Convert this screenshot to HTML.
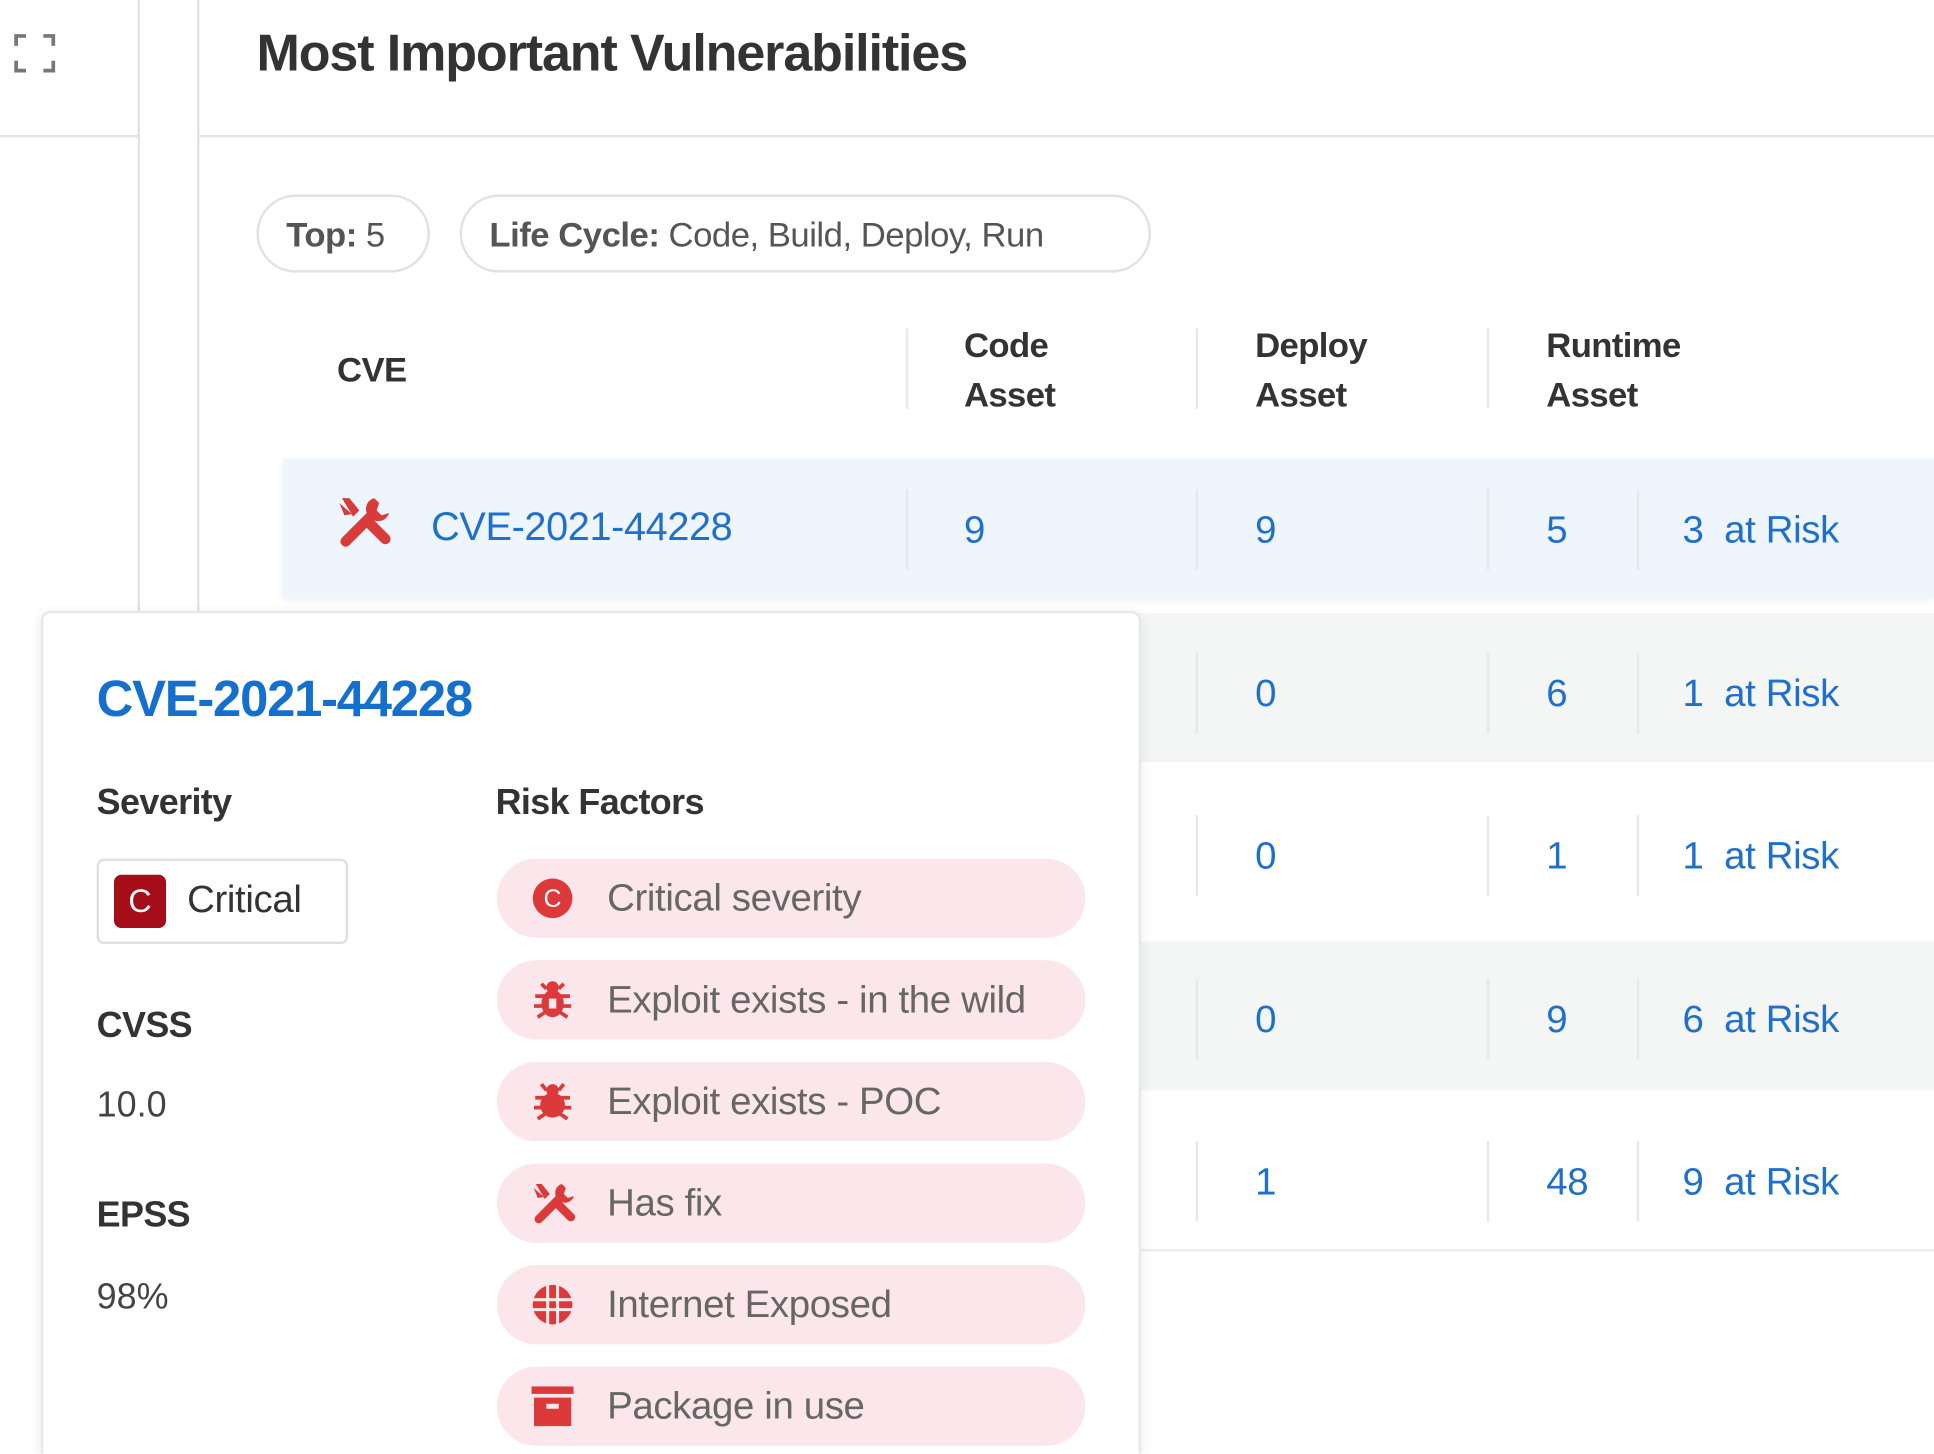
<!DOCTYPE html>
<html><head><meta charset="utf-8"><style>
*{margin:0;padding:0;box-sizing:border-box}
html,body{width:1934px;height:1454px;overflow:hidden;background:#fff;font-family:"Liberation Sans",sans-serif}
#s{position:absolute;left:0;top:0;width:1561px;height:1173px;overflow:hidden;transform:scale(1.2390);transform-origin:0 0}
.a{position:absolute;white-space:nowrap}
.h{font-weight:bold;color:#333;font-size:28px;letter-spacing:-0.5px}
.b{color:#1f6fcc;font-size:31px;letter-spacing:-0.3px}
.vs{position:absolute;width:2px;background:#e8e8e8}
.pill{position:absolute;left:401px;width:475px;height:64px;border-radius:32px;background:#fbe6ec}
.pill span{position:absolute;left:89px;top:14px;font-size:31px;color:#666;letter-spacing:-0.3px}
.pill svg{position:absolute;left:28px;top:15px}
.chip{position:absolute;top:157px;height:63px;border:2px solid #e2e2e2;border-radius:32px;font-size:28px;color:#555;padding:15px 22px;letter-spacing:-0.4px}
.row{position:absolute;left:228px;width:1333px}
</style></head><body><div id="s">
<div style="position:absolute;left:111px;top:0;width:2px;height:495px;background:#e3e3e3"></div>
<div style="position:absolute;left:159px;top:0;width:2px;height:495px;background:#e3e3e3"></div>
<div style="position:absolute;left:0;top:109px;width:111px;height:2px;background:#e3e3e3"></div>
<div style="position:absolute;left:161px;top:109px;width:1400px;height:2px;background:#e3e3e3"></div>
<svg class="a" style="left:11px;top:27px" width="34" height="32" viewBox="0 0 34 32" fill="none" stroke="#777" stroke-width="3"><path d="M2 10V2h8M24 2h8v8M32 22v8h-8M10 30H2v-8"/></svg>
<div class="a" style="left:207px;top:19px;font-size:42px;font-weight:bold;color:#333;letter-spacing:-0.9px">Most Important Vulnerabilities</div>
<div class="chip" style="left:207px;width:140px"><b>Top:</b> 5</div>
<div class="chip" style="left:371px;width:558px"><b>Life Cycle:</b> Code, Build, Deploy, Run</div>
<div class="a h" style="left:272px;top:283px">CVE</div>
<div class="a h" style="left:778px;top:259px;line-height:40px">Code<br>Asset</div>
<div class="a h" style="left:1013px;top:259px;line-height:40px">Deploy<br>Asset</div>
<div class="a h" style="left:1248px;top:259px;line-height:40px">Runtime<br>Asset</div>
<div class="vs" style="left:731px;top:265px;height:65px"></div>
<div class="vs" style="left:965px;top:265px;height:65px"></div>
<div class="vs" style="left:1200px;top:265px;height:65px"></div>
<div class="row" style="top:370px;height:113px;background:#eef5fd;box-shadow:0 2px 6px rgba(0,0,0,.06)"></div>
<div class="row" style="top:495px;height:120px;background:#f4f5f5"></div>
<div class="row" style="top:760px;height:120px;background:#f4f5f5"></div>
<div class="row" style="top:1008px;height:2px;background:#eee"></div>
<svg class="a" style="left:272px;top:400px" width="44" height="42" viewBox="0 0 44 42" fill="#d93a3a"><path d="M4 2l6 0 8 10-5 5z M2 6l4 10 6-1z"/><path d="M30 2a9 9 0 0 0-6 12L4 34a4 4 0 0 0 6 6l20-20a9 9 0 0 0 12-6l-6 2-4-4 2-6z"/><path d="M22 24l14 14a4 4 0 0 0 6-6L28 18z"/></svg>
<div class="a b" style="left:348px;top:407px;font-size:32px">CVE-2021-44228</div>
<div class="vs" style="left:731px;top:395px;height:65px"></div>
<div class="vs" style="left:965px;top:395px;height:65px"></div>
<div class="vs" style="left:1200px;top:395px;height:65px"></div>
<div class="vs" style="left:1321px;top:395px;height:65px"></div>
<div class="a b" style="left:778px;top:410px">9</div><div class="a b" style="left:1013px;top:410px">9</div><div class="a b" style="left:1248px;top:410px">5</div><div class="a b" style="left:1358px;top:410px">3&nbsp;&nbsp;at Risk</div>

<div class="vs" style="left:965px;top:527px;height:65px"></div><div class="vs" style="left:1200px;top:527px;height:65px"></div><div class="vs" style="left:1321px;top:527px;height:65px"></div>
<div class="a b" style="left:1013px;top:542px">0</div><div class="a b" style="left:1248px;top:542px">6</div><div class="a b" style="left:1358px;top:542px">1&nbsp;&nbsp;at Risk</div>

<div class="vs" style="left:965px;top:658px;height:65px"></div><div class="vs" style="left:1200px;top:658px;height:65px"></div><div class="vs" style="left:1321px;top:658px;height:65px"></div>
<div class="a b" style="left:1013px;top:673px">0</div><div class="a b" style="left:1248px;top:673px">1</div><div class="a b" style="left:1358px;top:673px">1&nbsp;&nbsp;at Risk</div>

<div class="vs" style="left:965px;top:790px;height:65px"></div><div class="vs" style="left:1200px;top:790px;height:65px"></div><div class="vs" style="left:1321px;top:790px;height:65px"></div>
<div class="a b" style="left:1013px;top:805px">0</div><div class="a b" style="left:1248px;top:805px">9</div><div class="a b" style="left:1358px;top:805px">6&nbsp;&nbsp;at Risk</div>

<div class="vs" style="left:965px;top:921px;height:65px"></div><div class="vs" style="left:1200px;top:921px;height:65px"></div><div class="vs" style="left:1321px;top:921px;height:65px"></div>
<div class="a b" style="left:1013px;top:936px">1</div><div class="a b" style="left:1248px;top:936px">48</div><div class="a b" style="left:1358px;top:936px">9&nbsp;&nbsp;at Risk</div>

<div style="position:absolute;left:33px;top:493px;width:888px;height:700px;background:#fff;border:2px solid #e8e8e8;border-radius:8px;box-shadow:0 2px 10px rgba(0,0,0,.08)"></div>
<div class="a" style="left:78px;top:541px;font-size:41px;font-weight:bold;color:#1570cd;letter-spacing:-1px">CVE-2021-44228</div>
<div class="a h" style="left:78px;top:632px;font-size:29px">Severity</div>
<div class="a h" style="left:400px;top:632px;font-size:29px">Risk Factors</div>
<div style="position:absolute;left:78px;top:693px;width:203px;height:69px;border:2px solid #e0e0e0;border-radius:6px"></div>
<div style="position:absolute;left:92px;top:706px;width:42px;height:43px;background:#a50e18;border-radius:6px;color:#fff;font-size:26px;text-align:center;line-height:43px">C</div>
<div class="a" style="left:151px;top:708px;font-size:31px;color:#333;letter-spacing:-0.3px">Critical</div>
<div class="a h" style="left:78px;top:812px;font-size:29px">CVSS</div>
<div class="a" style="left:78px;top:876px;font-size:29px;color:#444">10.0</div>
<div class="a h" style="left:78px;top:965px;font-size:29px">EPSS</div>
<div class="a" style="left:78px;top:1031px;font-size:29px;color:#444">98%</div>

<div class="pill" style="top:693px"><svg width="34" height="34" viewBox="0 0 34 34"><circle cx="17" cy="17" r="16" fill="#dc3a3a"/><text x="17" y="24" font-size="20" fill="#fff" text-anchor="middle" font-family="Liberation Sans">C</text></svg><span>Critical severity</span></div>
<div class="pill" style="top:775px"><svg width="34" height="34" viewBox="0 0 34 34" fill="#dc3a3a"><ellipse cx="17" cy="20" rx="9" ry="11"/><circle cx="17" cy="7" r="5"/><path d="M3 14h8M23 14h8M2 22h8M24 22h8M5 31l6-4M29 31l-6-4M8 4l4 4M26 4l-4 4" stroke="#dc3a3a" stroke-width="3"/><path d="M14 16h6v8h-6z" fill="#fbe6ec"/></svg><span>Exploit exists - in the wild</span></div>
<div class="pill" style="top:857px"><svg width="34" height="34" viewBox="0 0 34 34" fill="#dc3a3a"><ellipse cx="17" cy="20" rx="10" ry="10"/><circle cx="17" cy="8" r="5"/><path d="M3 14h8M23 14h8M2 22h8M24 22h8M5 31l6-4M29 31l-6-4M8 3l4 5M26 3l-4 5" stroke="#dc3a3a" stroke-width="3"/></svg><span>Exploit exists - POC</span></div>
<div class="pill" style="top:939px"><svg width="36" height="34" viewBox="0 0 44 42" fill="#dc3a3a"><path d="M4 2l6 0 8 10-5 5z M2 6l4 10 6-1z"/><path d="M30 2a9 9 0 0 0-6 12L4 34a4 4 0 0 0 6 6l20-20a9 9 0 0 0 12-6l-6 2-4-4 2-6z"/><path d="M22 24l14 14a4 4 0 0 0 6-6L28 18z"/></svg><span>Has fix</span></div>
<div class="pill" style="top:1021px"><svg width="34" height="34" viewBox="0 0 34 34"><circle cx="17" cy="17" r="16" fill="#dc3a3a"/><path d="M1 13h32M1 21h32M13 1v32M21 1v32" stroke="#fbe6ec" stroke-width="2.5"/></svg><span>Internet Exposed</span></div>
<div class="pill" style="top:1103px"><svg width="34" height="34" viewBox="0 0 34 34" fill="#dc3a3a"><rect x="0" y="1" width="34" height="6"/><rect x="2" y="10" width="30" height="23"/><rect x="12" y="15" width="10" height="4" fill="#fbe6ec"/></svg><span>Package in use</span></div>
</div></body></html>
